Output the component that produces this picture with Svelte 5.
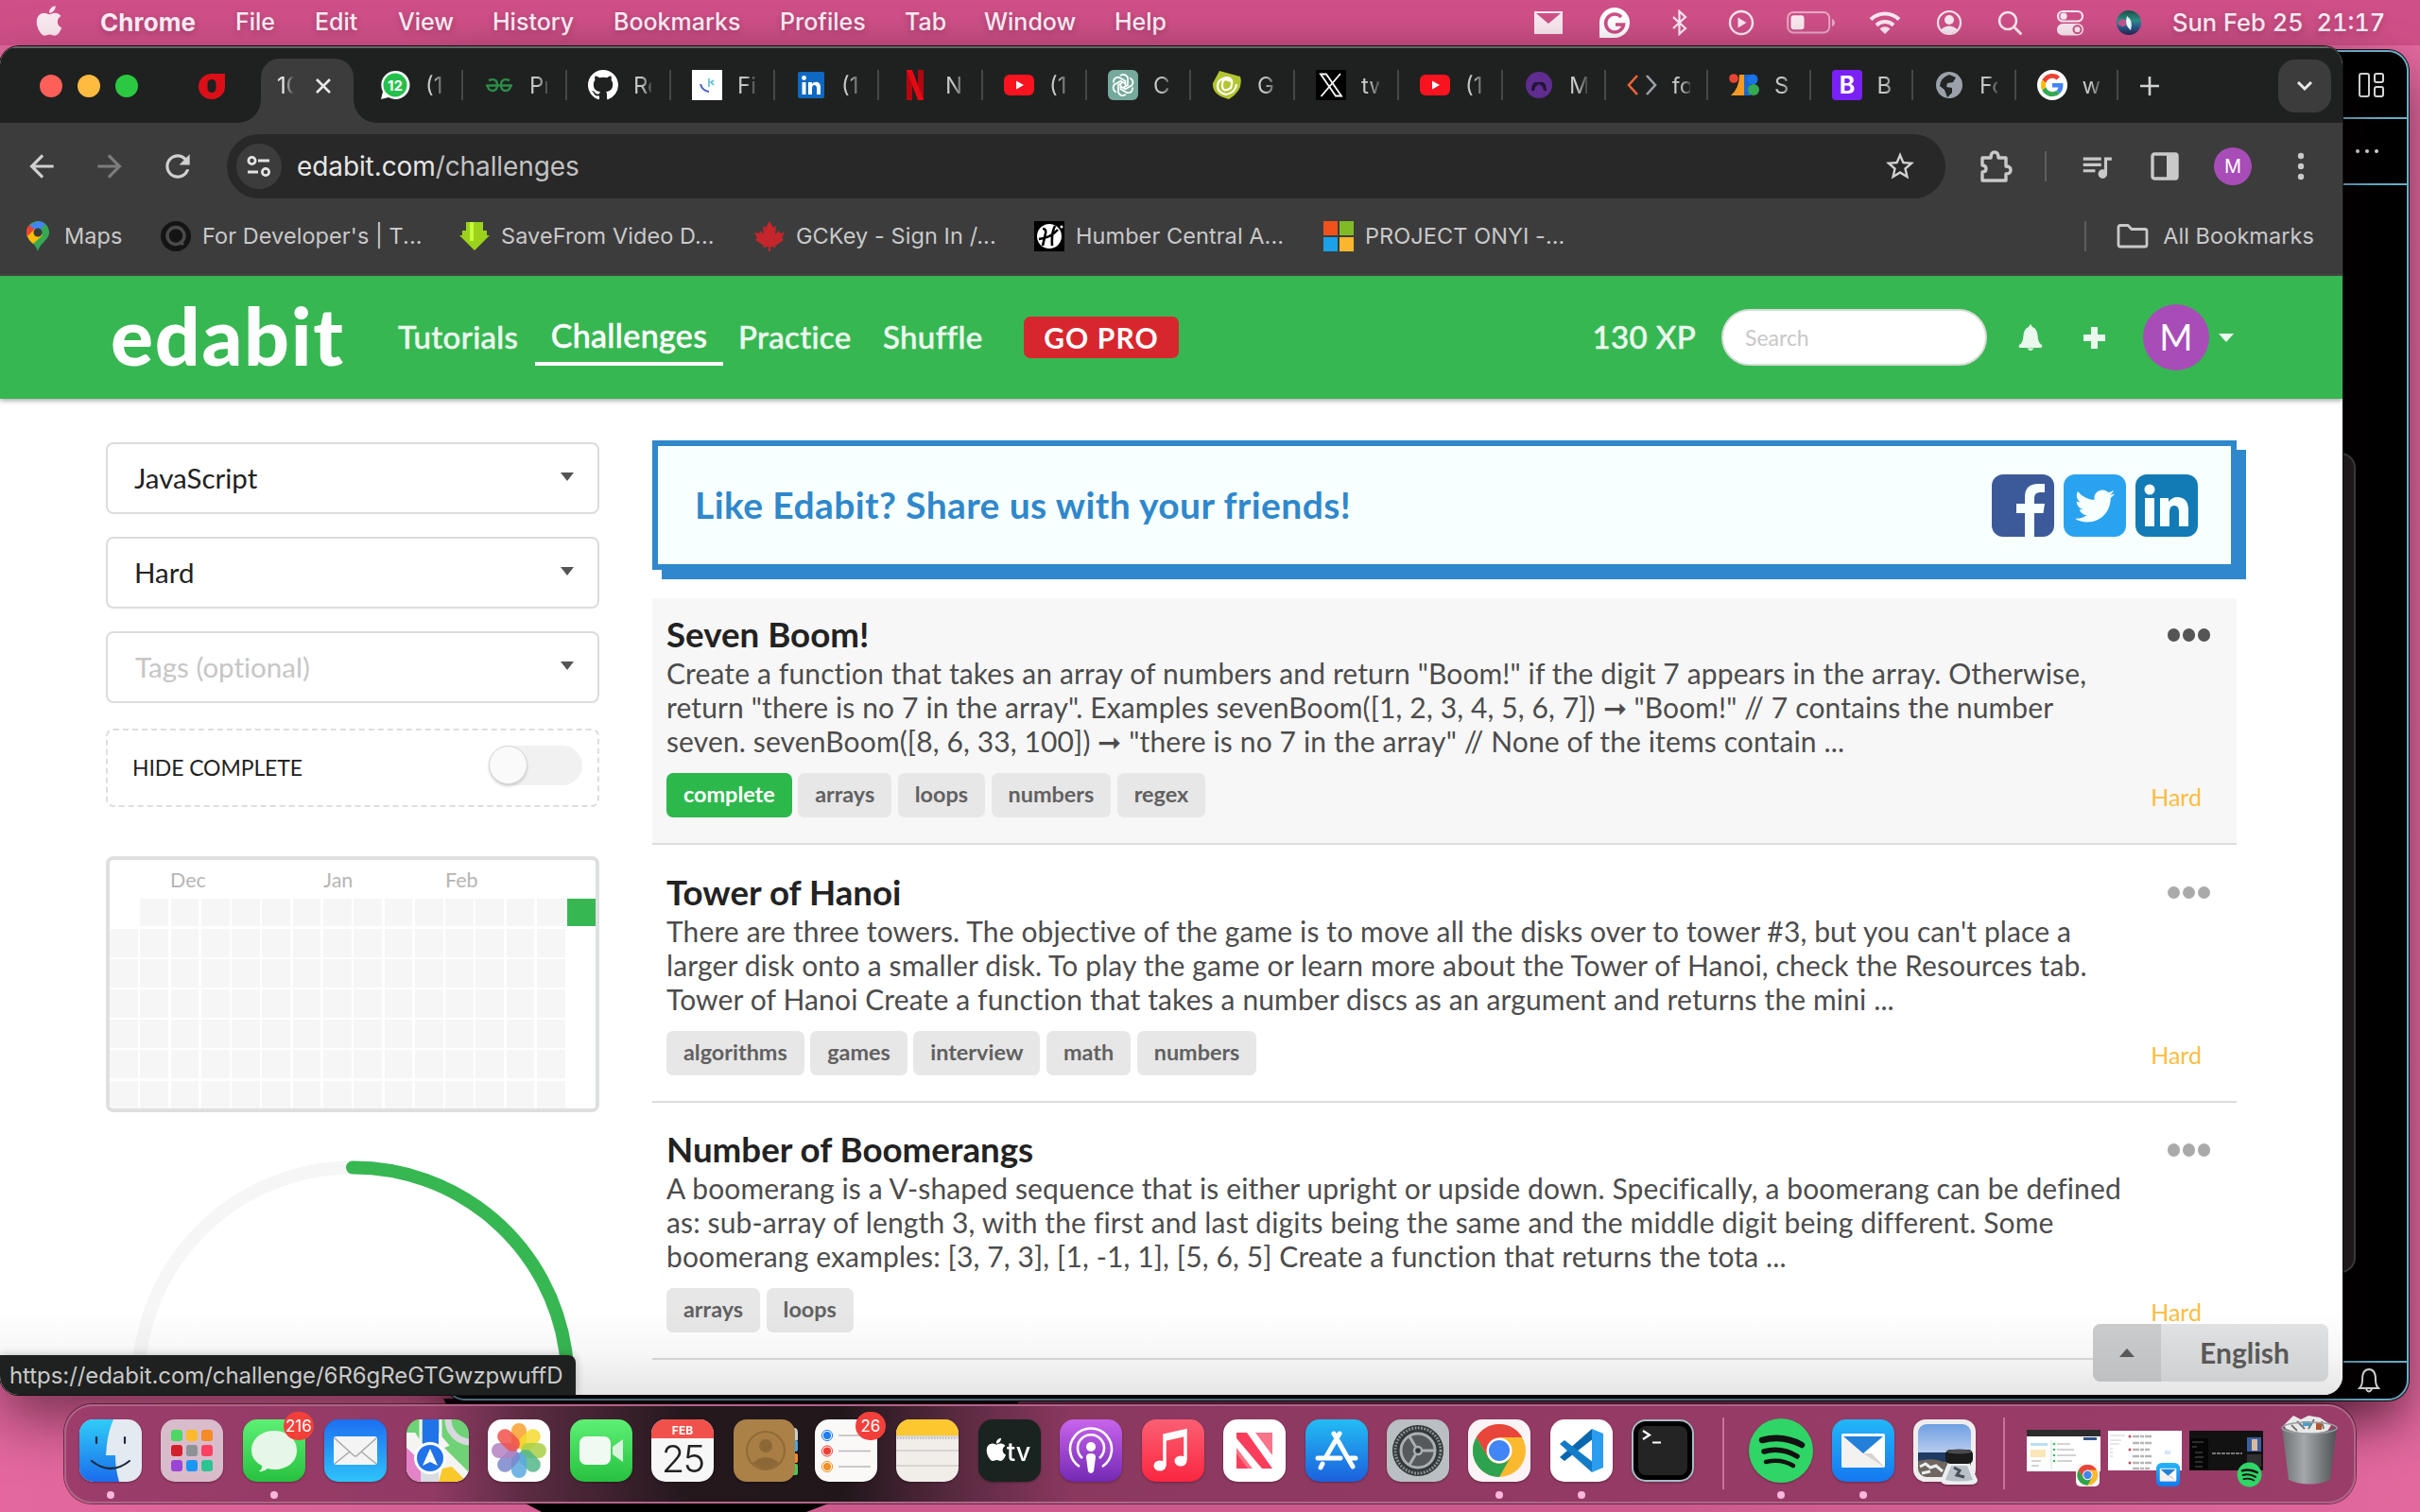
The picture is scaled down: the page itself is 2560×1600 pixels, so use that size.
<script>
  const menus = [
    { label: 'File', w: 84 }, { label: 'Edit', w: 88 }, { label: 'View', w: 100 },
    { label: 'History', w: 128 }, { label: 'Bookmarks', w: 176 }, { label: 'Profiles', w: 132 },
    { label: 'Tab', w: 84 }, { label: 'Window', w: 138 }, { label: 'Help', w: 90 }
  ];
  const status = [
    { icon: 'mailbox', w: 70 }, { icon: 'grammar', w: 70 }, { icon: 'bluetooth', w: 68 },
    { icon: 'play', w: 62 }, { icon: 'battery', w: 84 }, { icon: 'wifi', w: 74 },
    { icon: 'user', w: 62 }, { icon: 'search', w: 66 }, { icon: 'control', w: 62 }, { icon: 'siri', w: 62 }
  ];
  const tabs = [
    { icon: 'whatsapp', label: '(1' }, { icon: 'geeks', label: 'Pr' }, { icon: 'github', label: 'Re' },
    { icon: 'paper', label: 'Fi' }, { icon: 'linkedin', label: '(1' }, { icon: 'netflix', label: 'N' },
    { icon: 'youtube', label: '(1' }, { icon: 'gpt', label: 'C' }, { icon: 'swirl', label: 'G' },
    { icon: 'x', label: 'tw' }, { icon: 'youtube', label: '(1' }, { icon: 'purple', label: 'M' },
    { icon: 'code', label: 'fo' }, { icon: 'sdb', label: 'S' }, { icon: 'bootstrap', label: 'B' },
    { icon: 'globe', label: 'Fo' }, { icon: 'google', label: 'w' }
  ];
  const bookmarks = [
    { icon: 'maps', label: 'Maps', w: 146 }, { icon: 'dev', label: "For Developer's | T...", w: 316 },
    { icon: 'savefrom', label: 'SaveFrom Video D...', w: 312 }, { icon: 'maple', label: 'GCKey - Sign In /...', w: 296 },
    { icon: 'humber', label: 'Humber Central A...', w: 306 }, { icon: 'microsoft', label: 'PROJECT ONYI -...', w: 300 }
  ];
  const cards = [
    {
      title: 'Seven Boom!', hover: true, done: true, tags: ['arrays', 'loops', 'numbers', 'regex'],
      lines: [
        'Create a function that takes an array of numbers and return "Boom!" if the digit 7 appears in the array. Otherwise,',
        'return "there is no 7 in the array". Examples sevenBoom([1, 2, 3, 4, 5, 6, 7]) ➞ "Boom!" // 7 contains the number',
        'seven. sevenBoom([8, 6, 33, 100]) ➞ "there is no 7 in the array" // None of the items contain ...'
      ]
    },
    {
      title: 'Tower of Hanoi', tags: ['algorithms', 'games', 'interview', 'math', 'numbers'],
      lines: [
        "There are three towers. The objective of the game is to move all the disks over to tower #3, but you can't place a",
        'larger disk onto a smaller disk. To play the game or learn more about the Tower of Hanoi, check the Resources tab.',
        'Tower of Hanoi Create a function that takes a number discs as an argument and returns the mini ...'
      ]
    },
    {
      title: 'Number of Boomerangs', tags: ['arrays', 'loops'],
      lines: [
        'A boomerang is a V-shaped sequence that is either upright or upside down. Specifically, a boomerang can be defined',
        'as: sub-array of length 3, with the first and last digits being the same and the middle digit being different. Some',
        'boomerang examples: [3, 7, 3], [1, -1, 1], [5, 6, 5] Create a function that returns the tota ...'
      ]
    },
    { title: 'Sublish Trail', tags: [], lines: [] }
  ];
  const cells = Array.from({ length: 112 }, (_, i) => {
    const row = Math.floor(i / 16), col = i % 16;
    if (col === 15) return row === 0 ? 'done' : 'blank';
    return row === 0 && col === 0 ? 'blank' : '';
  });
  const dock = [
    { icon: 'finder', run: true }, { icon: 'launchpad' }, { icon: 'messages', run: true, badge: '216' },
    { icon: 'mail' }, { icon: 'appmaps' }, { icon: 'photos' }, { icon: 'facetime' }, { icon: 'calendar' },
    { icon: 'contacts' }, { icon: 'reminders', badge: '26' }, { icon: 'notes' }, { icon: 'tv' },
    { icon: 'podcasts' }, { icon: 'music' }, { icon: 'news' }, { icon: 'appstore' }, { icon: 'settings' },
    { icon: 'chrome', run: true }, { icon: 'vscode', run: true }, { icon: 'terminal' }
  ];
  const extras = [{ icon: 'spotify', run: true }, { icon: 'airmail', run: true }, { icon: 'preview' }];
  const petals = ['#f9a02b', '#f2dc2e', '#a9cf46', '#52b788', '#5aa9e0', '#7a86cc', '#b481c2', '#f0524a'];
  const pads = ['#4bd863', '#fdb92c', '#f58a26', '#d3202a', '#8d9299', '#fb4060', '#9a45d6', '#1a96f5', '#2cc493'];
</script>

{#snippet chromeBall()}
  <circle cx="33" cy="33" r="28" fill="#fbb92f" />
  <path d="M33 5a28 28 0 0 1 24.3 14H33z M8.7 19A28 28 0 0 1 57.3 19H33L21 40z" fill="#e8453c" />
  <path d="M8.7 19A28 28 0 0 0 33 61L45 40A14 14 0 0 1 21 40z" fill="#2fa24f" />
  <circle cx="33" cy="33" r="13.5" fill="#fff" /><circle cx="33" cy="33" r="11" fill="#4285f4" />
{/snippet}

{#snippet spotifyBall()}
  <circle cx="33" cy="33" r="34" fill="#2fd566" />
  <g fill="none" stroke="#111" stroke-linecap="round">
    <path d="M13 22q22-6 42 5" stroke-width="6.5" /><path d="M15 34q18-5 35 5" stroke-width="5.5" /><path d="M17 45q16-4 29 4" stroke-width="4.5" />
  </g>
{/snippet}

{#snippet airmailFace()}
  <rect x="10" y="15" width="46" height="36" rx="2" fill="#fff" /><path d="M10 18l46 33H10z" fill="#e9e4e4" opacity=".5" />
  <path d="M12 18h42L33 36z" fill="#2280d8" /><path d="M33 36L56 51l-14-15z" fill="#d8d2d2" />
{/snippet}

{#snippet glyph(name)}
  {#if name === 'mailbox'}
    <svg width="30" height="26" viewBox="0 0 30 26"><path d="M0 1h30v24H0z" fill="#fbe9f1" /><path d="M2 3h26L15 14z" fill="#cf5088" /></svg>
  {:else if name === 'grammar'}
    <svg width="32" height="32" viewBox="0 0 32 32"><path d="M16 0a16 16 0 1 1 0 32H0V16A16 16 0 0 1 16 0z" fill="#fff" /><path d="M23 10a9.500 9.500 0 1 0 2.500 8H17m6 0l3 3" fill="none" stroke="#cf5088" stroke-width="3.500" /></svg>
  {:else if name === 'bluetooth'}
    <svg width="18" height="28" viewBox="0 0 18 28"><path d="M2 8l13 12-6.500 6V2L15 8 2 20" fill="none" stroke="#fbe9f1" stroke-width="2.200" /></svg>
  {:else if name === 'play'}
    <svg width="28" height="28" viewBox="0 0 28 28"><circle cx="14" cy="14" r="12" fill="none" stroke="#fbe9f1" stroke-width="2.400" /><path d="M10.500 8.500v11l9-5.500z" fill="#fbe9f1" /></svg>
  {:else if name === 'battery'}
    <svg width="51" height="26" viewBox="0 0 51 26"><rect x="1.200" y="2" width="44" height="21.500" rx="6" fill="none" stroke="#e9a9c6" stroke-width="2" /><rect x="4.500" y="5.200" width="14" height="15" rx="3" fill="#fbe9f1" /><path d="M48 9v8q3-1 3-4t-3-4z" fill="#e9a9c6" /></svg>
  {:else if name === 'wifi'}
    <svg width="34" height="26" viewBox="0 0 34 26"><g fill="none" stroke="#fbe9f1" stroke-width="4"><path d="M2 9.500a21.500 21.500 0 0 1 30 0" /><path d="M8 15.700a13 13 0 0 1 18 0" /></g><path d="M17 25l-5.500-5.500a8 8 0 0 1 11 0z" fill="#fbe9f1" /></svg>
  {:else if name === 'user'}
    <svg width="28" height="28" viewBox="0 0 28 28"><circle cx="14" cy="14" r="12" fill="none" stroke="#fbe9f1" stroke-width="2.200" /><circle cx="14" cy="11" r="5" fill="#fbe9f1" /><path d="M5 21.500q9-8 18 0Q14 29 5 21.500z" fill="#fbe9f1" /></svg>
  {:else if name === 'search'}
    <svg width="28" height="28" viewBox="0 0 28 28"><circle cx="12" cy="12" r="9" fill="none" stroke="#fbe9f1" stroke-width="2.600" /><path d="M18.500 18.500l7 7" stroke="#fbe9f1" stroke-width="3" stroke-linecap="round" /></svg>
  {:else if name === 'control'}
    <svg width="30" height="28" viewBox="0 0 30 28"><rect x="2" y="2" width="26" height="10.500" rx="5.200" fill="none" stroke="#fbe9f1" stroke-width="2.200" /><circle cx="8" cy="7.200" r="3.600" fill="#fbe9f1" /><rect x="1" y="15" width="28" height="12.500" rx="6.200" fill="#fbe9f1" /><circle cx="22.500" cy="21.200" r="4" fill="none" stroke="#cf5088" stroke-width="2" /></svg>
  {:else if name === 'siri'}
    <svg width="28" height="28" viewBox="0 0 28 28"><defs><linearGradient id="siri" x1="0" x2="0" y1="0" y2="1"><stop offset="0" stop-color="#174f47" /><stop offset=".4" stop-color="#2f8f86" /><stop offset=".65" stop-color="#2a5f92" /><stop offset="1" stop-color="#2a2452" /></linearGradient></defs><circle cx="14" cy="14" r="13" fill="url(#siri)" /><path d="M2 15q5-9 11-1-5 8-11 1z" fill="#c2568f" /><path d="M12 7q7 5 4 15-7-5-4-15z" fill="#eaffff" /></svg>
  {:else if name === 'whatsapp'}
    <svg width="32" height="32" viewBox="0 0 32 32"><path d="M16 1a15 15 0 1 1-7 28L1 31l2-8A15 15 0 0 1 16 1z" fill="#fff" /><circle cx="16" cy="16" r="12.500" fill="#25c04b" /><text x="16" y="21.500" class="t-icon" font-size="15" text-anchor="middle" fill="#fff">12</text></svg>
  {:else if name === 'geeks'}
    <svg width="28" height="16" viewBox="0 0 28 16"><g fill="none" stroke="#2c8c46" stroke-width="2.400"><path d="M3 3q9-3 9 5 0 6-5 6-4 0-5-4.500M25 3q-9-3-9 5 0 6 5 6 4 0 5-4.500M0 8.500h28" /></g></svg>
  {:else if name === 'github'}
    <svg width="32" height="32" viewBox="0 0 16 16"><path fill="#fff" d="M8 0C3.580 0 0 3.580 0 8c0 3.540 2.290 6.530 5.470 7.590.4.070.55-.17.55-.38 0-.19-.01-.82-.01-1.490-2.010.37-2.530-.49-2.690-.94-.09-.23-.48-.94-.82-1.130-.28-.15-.68-.52-.01-.53.63-.01 1.080.58 1.230.82.72 1.210 1.870.87 2.330.66.07-.52.28-.87.51-1.070-1.780-.2-3.640-.89-3.640-3.950 0-.87.31-1.590.82-2.150-.08-.2-.36-1.020.08-2.120 0 0 .67-.21 2.200.82.64-.18 1.320-.27 2-.27.68 0 1.360.09 2 .27 1.530-1.040 2.200-.82 2.200-.82.44 1.100.16 1.920.08 2.120.51.56.82 1.270.82 2.150 0 3.070-1.870 3.750-3.650 3.950.29.25.54.73.54 1.480 0 1.070-.01 1.930-.01 2.200 0 .21.15.46.55.38A8.013 8.013 0 0016 8c0-4.420-3.580-8-8-8z" /></svg>
  {:else if name === 'paper'}
    <svg width="32" height="32" viewBox="0 0 32 32"><path d="M0 0h32v32H0z" fill="#fff" /><path d="M9 15q2 7 9 8" fill="none" stroke="#4a5fc4" stroke-width="2" /><path d="M18 9v9m5-7l-3 2 3 3" fill="none" stroke="#6cc3d9" stroke-width="1.800" /></svg>
  {:else if name === 'linkedin'}
    <svg width="28" height="28" viewBox="0 0 28 28"><rect width="28" height="28" rx="2" fill="#0f68c1" /><path d="M4.500 11h4v13h-4zM11 11h4v2c2-3.500 9-3.500 9 3v8h-4v-7c0-4-5-4-5 0v7h-4z" fill="#fff" /><circle cx="6.500" cy="6.500" r="2.400" fill="#fff" /></svg>
  {:else if name === 'netflix'}
    <svg width="18" height="32" viewBox="0 0 18 32"><path d="M0 0h6v32H0zM12 0h6v32h-6z" fill="#b20710" /><path d="M0 0h6l12 32h-6z" fill="#e50914" /></svg>
  {:else if name === 'youtube'}
    <svg width="32" height="24" viewBox="0 0 32 24"><rect y="1" width="32" height="22" rx="6" fill="#f9131f" /><path d="M13 7.500v9l8-4.500z" fill="#fff" /></svg>
  {:else if name === 'gpt'}
    <svg width="32" height="32" viewBox="0 0 32 32"><rect width="32" height="32" rx="6" fill="#75a99c" /><g fill="none" stroke="#fff" stroke-width="1.700">{#each [0, 60, 120, 180, 240, 300] as a}<path d="M13 6q5-3 8 2v8l-5 3" transform="rotate({a} 16 16)" />{/each}</g></svg>
  {:else if name === 'swirl'}
    <svg width="32" height="32" viewBox="0 0 32 32"><path d="M8 1l22 6q4 14-12 24Q0 27 1 14z" fill="#b3c530" /><path d="M20 12q-9-5-9 4t9 3q4-11-5-11-9 2-9 9t9 9q10-2 11-11" fill="none" stroke="#fff" stroke-width="2.200" /></svg>
  {:else if name === 'x'}
    <svg width="32" height="32" viewBox="0 0 32 32"><path d="M0 0h32v32H0z" /><path d="M5 4.500h6l16 23h-6zM26 4L5.500 28" fill="none" stroke="#fff" stroke-width="1.800" /></svg>
  {:else if name === 'purple'}
    <svg width="28" height="28" viewBox="0 0 28 28"><circle cx="14" cy="14" r="14" fill="#5e2d8f" /><path d="M6 20q0-11 8-9 8-2 8 9-4 1-4-4l-4-3-4 3q0 5-4 4z" fill="#241438" /></svg>
  {:else if name === 'code'}
    <svg width="32" height="22" viewBox="0 0 32 22"><path d="M11 1L2 11l9 10" fill="none" stroke="#f0643a" stroke-width="2.600" /><path d="M21 1l9 10-9 10" fill="none" stroke="#9aa0a6" stroke-width="2.600" /></svg>
  {:else if name === 'sdb'}
    <svg width="32" height="24" viewBox="0 0 32 24"><circle cx="5" cy="5" r="4.800" fill="#e94335" /><path d="M2 23q9-8 9-22h5v22z" fill="#f59a23" /><path d="M16 1h7v22h-7z" fill="#1967d2" /><circle cx="25" cy="6" r="5.500" fill="#1a73e8" /><circle cx="26" cy="17" r="6" fill="#34a853" /></svg>
  {:else if name === 'bootstrap'}
    <svg width="32" height="32" viewBox="0 0 32 32"><rect width="32" height="32" rx="4" fill="#7a22f5" /><text x="16" y="25" class="t-icon" font-size="25" text-anchor="middle" fill="#fff">B</text></svg>
  {:else if name === 'globe'}
    <svg width="28" height="28" viewBox="0 0 28 28"><circle cx="14" cy="14" r="14" fill="#9aa1aa" /><path d="M14 3l7 3-3 5-6 1-1 4 6 1v5l-5 5-3-8-5-4q1-9 10-12z" fill="#222524" /></svg>
  {:else if name === 'google'}
    <svg width="32" height="32" viewBox="0 0 64 64"><circle cx="32" cy="32" r="32" fill="#fff" /><g transform="translate(8 8)"><path fill="#EA4335" d="M24 9.500c3.540 0 6.710 1.220 9.210 3.600l6.850-6.850C35.900 2.380 30.470 0 24 0 14.620 0 6.510 5.380 2.560 13.220l7.980 6.190C12.430 13.720 17.740 9.500 24 9.500z" /><path fill="#4285F4" d="M46.980 24.550c0-1.570-.15-3.090-.38-4.550H24v9.020h12.940c-.58 2.960-2.260 5.480-4.780 7.180l7.730 6c4.510-4.180 7.090-10.360 7.090-17.650z" /><path fill="#FBBC05" d="M10.530 28.590c-.48-1.450-.76-2.990-.76-4.590s.27-3.140.76-4.590l-7.980-6.190C.92 16.460 0 20.120 0 24c0 3.880.92 7.540 2.560 10.780l7.970-6.190z" /><path fill="#34A853" d="M24 48c6.480 0 11.930-2.130 15.890-5.810l-7.730-6c-2.150 1.450-4.920 2.300-8.160 2.300-6.260 0-11.570-4.220-13.470-9.910l-7.980 6.190C6.510 42.620 14.620 48 24 48z" /></g></svg>
  {:else if name === 'maps'}
    <svg width="24" height="32" viewBox="0 0 24 32"><path d="M12 0a12 12 0 0 1 12 12c0 8-9 10-12 20C9 22 0 20 0 12A12 12 0 0 1 12 0z" fill="#34a853" /><path d="M12 0L4 4a12 12 0 0 0-4 9l4 8L20 3a12 12 0 0 0-8-3z" fill="#4285f4" /><path d="M3 4a12 12 0 0 0-2 13l9-7z" fill="#ea4335" /><path d="M1 16l8-8 8 7-10 9q-5-4-6-8z" fill="#fbbc05" /><circle cx="12" cy="12" r="4.500" fill="#37393b" /></svg>
  {:else if name === 'dev'}
    <svg width="32" height="32" viewBox="0 0 32 32"><circle cx="16" cy="16" r="16" fill="#141414" /><circle cx="16" cy="15.500" r="9" fill="none" stroke="#4b4b4b" stroke-width="3.500" /><path d="M20 21l4 4" stroke="#4b4b4b" stroke-width="3" /></svg>
  {:else if name === 'savefrom'}
    <svg width="32" height="30" viewBox="0 0 32 30"><path d="M7 0h18v9h4v5h3L16 30 0 14h3V9h4z" fill="#9bd31c" /><path d="M11 0h4v20h-4z" fill="#c5ff3c" /></svg>
  {:else if name === 'maple'}
    <svg width="32" height="32" viewBox="0 0 32 32"><path d="M16 0l4 7 3-2-1 9 4-4 1 3 5-1-3 6 2 2-9 6 1 2-6-1v5h-2v-5l-6 1 1-2-9-6 2-2-3-6 5 1 1-3 4 4-1-9 3 2z" fill="#c5262c" /></svg>
  {:else if name === 'humber'}
    <svg width="32" height="32" viewBox="0 0 32 32"><path d="M0 0h32v32H0z" /><circle cx="16" cy="16" r="13" fill="#fff" /><path d="M9 8q4 0 3 5l-3 13M22 5q-4 8-3 21M5 19q12-1 20-10" fill="none" stroke="#000" stroke-width="2.600" /><circle cx="29" cy="6" r="1.500" fill="#fff" /></svg>
  {:else if name === 'microsoft'}
    <svg width="32" height="32" viewBox="0 0 32 32"><path d="M0 0h15v15H0z" fill="#f1511b" /><path d="M17 0h15v15H17z" fill="#80bb26" /><path d="M0 17h15v15H0z" fill="#1ba1e8" /><path d="M17 17h15v15H17z" fill="#fbb62d" /></svg>
  {/if}
{/snippet}

{#snippet app(name)}
  <svg class="app" viewBox="0 0 66 66">
    {#if name === 'finder'}
      <rect width="66" height="66" rx="15" fill="#e4eaf2" /><path d="M15 0h21q-7 16-8 38h10q0 14 4 28H15A15 15 0 0 1 0 51V15A15 15 0 0 1 15 0z" fill="url(#blue)" />
      <g fill="none" stroke="#1c2a3c" stroke-width="2.200" stroke-linecap="round"><path d="M18 19v6M48 19v6M13 44q20 16 40 0" /></g>
    {:else if name === 'launchpad'}
      <rect width="66" height="66" rx="15" fill="#d9bccb" />
      {#each pads as c, i}<rect x={11 + (i % 3) * 16} y={11 + Math.floor(i / 3) * 16} width="12" height="12" rx="3" fill={c} />{/each}
    {:else if name === 'messages'}
      <rect width="66" height="66" rx="15" fill="url(#green)" /><path d="M33 12c14 0 24 9 24 21S47 53 33 53q-4 0-7-1-4 4-9 3 4-3 3-6Q9 43 9 33c0-12 10-21 24-21z" fill="#e6f7e8" />
    {:else if name === 'mail'}
      <rect width="66" height="66" rx="15" fill="url(#mailblue)" /><rect x="10" y="18" width="46" height="30" rx="3" fill="#f4f4f4" /><path d="M11 20l20 18q2 2 4 0l20-18M11 47l16-13M55 47L39 34" fill="none" stroke="#a8a8a8" stroke-width="1.500" />
    {:else if name === 'appmaps'}
      <clipPath id="mapclip"><rect width="66" height="66" rx="15" /></clipPath>
      <g clip-path="url(#mapclip)"><path d="M0 0h66v66H0z" fill="#6fd277" /><path d="M0 14h34l32 38v14H0z" fill="#f4f4f2" /><path d="M0 0h17v26z" fill="#6fd277" /><path d="M0 30l15 14v22H0z" fill="#e583c8" /><path d="M34 66l4-14 10-2 16 16z" fill="#f9c82b" /><path d="M40 30l26 26V20z" fill="#6fd277" /><path d="M17 0h17v40H17zM15 54h19v12H15z" fill="#2173ea" /><path d="M15 54h19v12H15z" fill="#d9dce0" /><path d="M15 0v28M36 0v28" stroke="#f4f4f2" stroke-width="3" /><circle cx="68" cy="0" r="24" fill="none" stroke="#d7d9dc" stroke-width="7" /><circle cx="25" cy="41" r="17" fill="#fff" /><circle cx="25" cy="41" r="14" fill="#2173ea" /><path d="M25 31l8 18-8-4-8 4z" fill="#fff" /></g>
    {:else if name === 'photos'}
      <rect width="66" height="66" rx="15" fill="#fdfdfd" />
      {#each petals as c, i}<rect x="25" y="4" width="16" height="27" rx="8" fill={c} opacity=".85" transform="rotate({i * 45} 33 33)" />{/each}
    {:else if name === 'facetime'}
      <rect width="66" height="66" rx="15" fill="url(#green)" /><rect x="10" y="18" width="33" height="30" rx="7" fill="#f1faf2" /><path d="M45 29l11-8v24l-11-8z" fill="#d9f3dc" />
    {:else if name === 'calendar'}
      <rect width="66" height="66" rx="15" fill="#f8f7f7" /><path d="M0 20v-5A15 15 0 0 1 15 0h36a15 15 0 0 1 15 15v5z" fill="#f1514b" /><text x="33" y="16" class="t-icon" font-size="12" text-anchor="middle" fill="#fff">FEB</text><text x="33" y="56" class="t-thin" font-size="40" text-anchor="middle" fill="#222">25</text>
    {:else if name === 'contacts'}
      <path d="M55 9h9q4 0 4 5v8H55z" fill="#c9ccd0" /><rect x="50" y="22" width="18" height="12" rx="2" fill="#4aa7dd" /><rect x="50" y="36" width="18" height="10" rx="2" fill="#ef8b2e" /><rect x="50" y="47" width="18" height="12" rx="2" fill="#4cc45b" />
      <rect width="65" height="66" rx="14" fill="#ac8148" /><circle cx="34" cy="33" r="20" fill="#a87e45" stroke="#8f6a37" stroke-width="2" /><circle cx="34" cy="28" r="7" fill="#8c6836" /><path d="M20 46q14-12 28 0-14 12-28 0z" fill="#8c6836" />
    {:else if name === 'reminders'}
      <rect width="66" height="66" rx="15" fill="#faf9f8" />
      {#each ['#1f7df2', '#ef3f35', '#f49023'] as c, i}<circle cx="13" cy={17 + i * 16.500} r="4.600" fill={c} stroke="#fff" stroke-width="1" /><circle cx="13" cy={17 + i * 16.500} r="5.600" fill="none" stroke={c} /><path d="M25 {17 + i * 16.500}h34" stroke="#b9b9bb" stroke-width="1.500" />{/each}
    {:else if name === 'notes'}
      <rect width="66" height="66" rx="15" fill="#f1eeea" /><path d="M0 17v-2A15 15 0 0 1 15 0h36a15 15 0 0 1 15 15v2z" fill="#fdc82f" /><path d="M0 18h66M0 33h66M0 49h66" stroke="#cfccc9" stroke-width="1.500" /><path d="M1 20h64" stroke="#aaa" stroke-width="1.500" stroke-dasharray="1.500 1.500" />
    {:else if name === 'tv'}
      <rect width="66" height="66" rx="15" fill="#19231f" /><g transform="translate(8.500 18) scale(.054)"><path fill="#fff" d="M318.700 268.700c-.2-36.700 16.400-64.400 50-84.800-18.800-26.900-47.200-41.700-84.700-44.600-35.500-2.800-74.300 20.700-88.500 20.700-15 0-49.400-19.700-76.400-19.700C63.300 141.200 4 184.800 4 273.500q0 39.300 14.400 81.200c12.800 36.700 59 126.700 107.200 125.200 25.200-.6 43-17.900 75.800-17.900 31.800 0 48.300 17.900 76.400 17.900 48.600-.7 90.400-82.500 102.600-119.300-65.200-30.700-61.700-90-61.700-91.900zm-56.600-164.200c27.300-32.400 24.800-61.900 24-72.500-24.100 1.400-52 16.400-67.900 34.900-17.500 19.800-27.800 44.300-25.600 71.900 26.100 2 49.900-11.400 69.500-34.300z" /></g><text x="30" y="43.500" class="t-med" font-size="27" fill="#fff">tv</text>
    {:else if name === 'podcasts'}
      <rect width="66" height="66" rx="15" fill="url(#violet)" /><g fill="none" stroke="#fff" stroke-width="2.600"><path d="M21 50a22 22 0 1 1 24 0" /><path d="M24 41a14 14 0 1 1 18 0" /></g><circle cx="33" cy="29" r="5" fill="#fff" /><path d="M28 40q0-4 5-4t5 4l-2 15q-3 4-6 0z" fill="#fff" />
    {:else if name === 'music'}
      <rect width="66" height="66" rx="15" fill="url(#red)" /><path d="M24 49V17l22-5v31" fill="none" stroke="#fff" stroke-width="3.500" /><path d="M24 16l22-5v7l-22 5z" fill="#fff" /><ellipse cx="19" cy="49" rx="6.500" ry="5.500" fill="#fff" /><ellipse cx="41" cy="44" rx="6.500" ry="5.500" fill="#fff" />
    {:else if name === 'news'}
      <rect width="66" height="66" rx="15" fill="#fff" /><path d="M14 14h11l27 38H41L14 20z" fill="#fb3d5c" /><path d="M34 14h18v24zM14 30v22h17z" fill="#f97389" /><path d="M14 36v16h12z" fill="#fb3d5c" />
    {:else if name === 'appstore'}
      <rect width="66" height="66" rx="15" fill="url(#store)" /><g stroke="#fff" stroke-width="5" stroke-linecap="round"><path d="M36 15L21 41M30 15l20 35M13 41h24M46 41h7M18 47l-2 4" /></g>
    {:else if name === 'settings'}
      <rect width="66" height="66" rx="15" fill="#b9bfc3" /><circle cx="33" cy="33" r="27" fill="#33383a" /><circle cx="33" cy="33" r="24" fill="none" stroke="#8d9396" stroke-width="3" stroke-dasharray="1.800 1.500" /><circle cx="33" cy="33" r="18" fill="#55595b" stroke="#a9afb3" stroke-width="3" /><circle cx="33" cy="33" r="4" fill="#333" stroke="#a9afb3" stroke-width="2.500" /><path d="M38 33h13M30.500 29l-6.500-11M30.500 37l-6.500 11" stroke="#a9afb3" stroke-width="3" />
    {:else if name === 'chrome'}
      <rect width="66" height="66" rx="15" fill="#faf4f7" />{@render chromeBall()}
    {:else if name === 'vscode'}
      <rect width="66" height="66" rx="15" fill="#fff" /><path d="M44 10L10 40l5 4 31-24z" fill="#0b67ad" /><path d="M44 56L10 26l5-4 31 24z" fill="#137cc8" /><path d="M44 10l12 5v36l-12 5z" fill="#2a9df0" />
    {:else if name === 'terminal'}
      <rect width="66" height="66" rx="15" fill="#a9bcc6" /><rect x="2" y="2" width="62" height="62" rx="13" /><rect x="7" y="7" width="52" height="52" rx="8" fill="#242424" /><path d="M12 12l7 4.500-7 4.500M22 24.500h9" fill="none" stroke="#fff" stroke-width="2.200" />
    {:else if name === 'spotify'}
      {@render spotifyBall()}
    {:else if name === 'airmail'}
      <rect width="66" height="66" rx="15" fill="url(#air)" />{@render airmailFace()}
    {:else if name === 'preview'}
      <rect width="66" height="66" rx="13" fill="#f0eded" /><rect x="5" y="5" width="56" height="56" rx="9" fill="url(#sky)" /><path d="M5 35h56v10H5z" fill="#1f3a63" /><path d="M5 44q16-4 27 1l29-3v10a9 9 0 0 1-9 9H14a9 9 0 0 1-9-9z" fill="#6f675f" /><path d="M7 50l6-3 5 4 6-2 7 6M9 57l9-2" stroke="#e8eef2" stroke-width="3" fill="none" /><path d="M37 45h22l9 19q0 5-8 5H37q-8 0-8-5z" fill="#eceff1" /><path d="M40 49h17l6 15q-14 3-29 0z" fill="#b9c0c6" /><path d="M43 51l6 3-3 5 8 2" stroke="#47505a" stroke-width="3" fill="none" /><rect x="34" y="32" width="29" height="15" rx="5" fill="#1b1b1c" /><ellipse cx="48.500" cy="34" rx="13" ry="2.500" fill="#4b4b4c" />
    {/if}
  </svg>
{/snippet}

{#snippet dockItem(d)}
  <div class="dock-item">
    {@render app(d.icon)}
    {#if d.badge}<span class="badge">{d.badge}</span>{/if}
    {#if d.run}<i class="running"></i>{/if}
  </div>
{/snippet}

<svg class="defs" width="0" height="0">
  <defs>
    <linearGradient id="blue" x2="0" y2="1"><stop stop-color="#2fcdf8" /><stop offset="1" stop-color="#1b6cec" /></linearGradient>
    <linearGradient id="mailblue" x2="0" y2="1"><stop stop-color="#1d6ff0" /><stop offset="1" stop-color="#2ec3fb" /></linearGradient>
    <linearGradient id="green" x2="0" y2="1"><stop stop-color="#5df075" /><stop offset="1" stop-color="#27c13f" /></linearGradient>
    <linearGradient id="violet" x2="0" y2="1"><stop stop-color="#c864ec" /><stop offset="1" stop-color="#7429b4" /></linearGradient>
    <linearGradient id="red" x2="0" y2="1"><stop stop-color="#fb5f73" /><stop offset="1" stop-color="#fa2740" /></linearGradient>
    <linearGradient id="store" x2="0" y2="1"><stop stop-color="#23bdf4" /><stop offset="1" stop-color="#1c60dd" /></linearGradient>
    <linearGradient id="air" x2="0" y2="1"><stop stop-color="#23b6f9" /><stop offset="1" stop-color="#1478f0" /></linearGradient>
    <linearGradient id="sky" x2="0" y2="1"><stop stop-color="#6f9fe2" /><stop offset=".55" stop-color="#b9cdee" /></linearGradient>
    <linearGradient id="bin" x2="1" y2="0"><stop stop-color="#6c7072" /><stop offset=".4" stop-color="#a4a8aa" /><stop offset="1" stop-color="#4e5254" /></linearGradient>
  </defs>
</svg>

<div class="desktop">
  <svg class="wallpaper" viewBox="0 0 2560 1600"><path d="M469 1480h611l-20 30-181 80-26 10H573l-19-10-60-60z M950 46h90v6h-90z" /></svg>

  <header class="menubar">
    <svg class="apple" viewBox="0 0 384 512"><path fill="#fbe9f1" d="M318.700 268.700c-.2-36.700 16.400-64.400 50-84.800-18.800-26.900-47.200-41.700-84.700-44.600-35.500-2.800-74.300 20.700-88.500 20.700-15 0-49.400-19.700-76.400-19.700C63.300 141.200 4 184.800 4 273.500q0 39.300 14.400 81.200c12.800 36.700 59 126.700 107.200 125.200 25.200-.6 43-17.900 75.800-17.900 31.800 0 48.300 17.900 76.400 17.900 48.600-.7 90.400-82.500 102.600-119.300-65.200-30.700-61.700-90-61.700-91.900zm-56.600-164.200c27.300-32.400 24.800-61.900 24-72.500-24.100 1.400-52 16.400-67.900 34.900-17.500 19.800-27.800 44.300-25.600 71.900 26.100 2 49.900-11.400 69.500-34.300z" /></svg>
    <b class="app-name">Chrome</b>
    {#each menus as m}<span class="menu" style:width="{m.w}px">{m.label}</span>{/each}
    <div class="status">
      {#each status as s}<span class="slot" style:width="{s.w}px">{@render glyph(s.icon)}</span>{/each}
      <span class="clock">Sun Feb 25&nbsp; 21:17</span>
    </div>
  </header>

  <section class="editor-window">
    <div class="ed-cell ed-top"><svg width="28" height="26" viewBox="0 0 28 26"><g fill="none" stroke="#ddd" stroke-width="2"><rect x="1" y="1" width="10" height="24" rx="2" /><rect x="17" y="1" width="9" height="9" rx="2" /><rect x="17" y="15" width="9" height="10" rx="2" /></g></svg></div>
    <div class="ed-cell ed-more"><svg width="26" height="6" viewBox="0 0 26 6"><g fill="#ddd"><circle cx="3" cy="3" r="2" /><circle cx="13" cy="3" r="2" /><circle cx="23" cy="3" r="2" /></g></svg></div>
    <div class="ed-body"><div class="ed-panel"></div></div>
    <div class="ed-cell ed-bell"><svg width="24" height="28" viewBox="0 0 24 28"><path d="M2 22q3-3 3-9 0-11 7-11t7 11q0 6 3 9zM9 23q3 5 6 0" fill="none" stroke="#ddd" stroke-width="2" /></svg></div>
  </section>

  <section class="browser">
    <div class="tabstrip">
      <div class="lights"><i class="close"></i><i class="min"></i><i class="max"></i></div>
      <svg class="pinned" viewBox="0 0 28 28"><path d="M14 1h14v13a14 13.500 0 1 1-14-13z" fill="#dc0f19" /><rect x="9.500" y="7" width="9" height="14" rx="4.500" fill="#1f2120" /></svg>
      <div class="tab-active"><span>10</span><svg width="18" height="18" viewBox="0 0 18 18"><path d="M2 2l14 14M16 2L2 16" stroke="#e8e8e8" stroke-width="2.600" /></svg></div>
      <div class="tabs">
        {#each tabs as t}
          <div class="tab"><span class="favicon">{@render glyph(t.icon)}</span><span class="tab-label">{t.label}</span></div>
        {/each}
      </div>
      <svg class="new-tab" viewBox="0 0 20 20"><path d="M10 0v20M0 10h20" stroke="#d2d2d2" stroke-width="2.600" /></svg>
      <div class="tab-search"><svg width="18" height="12" viewBox="0 0 18 12"><path d="M2 2l7 7 7-7" fill="none" stroke="#e8e8e8" stroke-width="3" /></svg></div>
    </div>

    <div class="toolbar">
      <div class="nav-buttons">
        <svg viewBox="0 0 24 24" fill="#d0d0d0"><path d="M20 11H7.830l5.590-5.590L12 4l-8 8 8 8 1.410-1.410L7.830 13H20v-2z" /></svg>
        <svg viewBox="0 0 24 24" fill="#7c7c7c"><path d="M4 11h12.170l-5.590-5.590L12 4l8 8-8 8-1.410-1.410L16.170 13H4v-2z" /></svg>
        <svg viewBox="0 0 24 24" fill="#d0d0d0"><path d="M17.650 6.350C16.200 4.900 14.210 4 12 4c-4.420 0-7.990 3.580-7.990 8s3.570 8 7.990 8c3.730 0 6.840-2.550 7.730-6h-2.080c-.82 2.330-3.040 4-5.650 4-3.310 0-6-2.690-6-6s2.690-6 6-6c1.660 0 3.140.69 4.220 1.780L13 11h7V4l-2.350 2.350z" /></svg>
      </div>
      <div class="omnibox">
        <span class="site-info"><svg width="26" height="24" viewBox="0 0 26 24"><g fill="none" stroke="#e3e3e3" stroke-width="2.800"><circle cx="5.500" cy="6" r="3.600" /><path d="M12 6h12M1 18h11" /><circle cx="20" cy="18" r="3.600" /></g></svg></span>
        <span class="url">edabit.com<em>/challenges</em></span>
        <svg class="star" viewBox="0 0 24 24" fill="#d0d0d0"><path d="M22 9.240l-7.190-.62L12 2 9.190 8.630 2 9.240l5.460 4.730L5.820 21 12 17.270 18.180 21l-1.630-7.030L22 9.240zM12 15.400l-3.760 2.270 1-4.280-3.320-2.880 4.380-.38L12 6.100l1.710 4.040 4.380.38-3.320 2.880 1 4.280L12 15.400z" /></svg>
      </div>
      <div class="tools">
        <svg class="puzzle" viewBox="0 0 36 36"><path d="M4 9h9q0-6 4-6t4 6h8v9q5 0 5 4t-5 4v7H4v-9q4 0 4-3.500T4 17z" fill="none" stroke="#c9c9c9" stroke-width="3.400" stroke-linejoin="round" /></svg>
        <i class="bar"></i>
        <svg class="queue" viewBox="0 0 24 24" fill="#c9c9c9"><path d="M15 6H3v2h12V6zm0 4H3v2h12v-2zM3 16h8v-2H3v2zM17 6v8.180c-.31-.11-.65-.18-1-.18-1.660 0-3 1.340-3 3s1.340 3 3 3 3-1.340 3-3V8h3V6h-5z" /></svg>
        <svg class="panel" viewBox="0 0 30 30"><rect x="2" y="2" width="26" height="26" rx="2" fill="none" stroke="#c9c9c9" stroke-width="3.400" /><path d="M17 2h11v26H17z" fill="#c9c9c9" /></svg>
        <span class="profile">M</span>
        <svg class="kebab" viewBox="0 0 8 30" fill="#c9c9c9"><circle cx="4" cy="4" r="3.200" /><circle cx="4" cy="15" r="3.200" /><circle cx="4" cy="26" r="3.200" /></svg>
      </div>
    </div>

    <div class="bookmarks">
      {#each bookmarks as b}
        <span class="bookmark" style:width="{b.w}px"><span class="bm-icon">{@render glyph(b.icon)}</span>{b.label}</span>
      {/each}
      <div class="all-bookmarks"><i class="bar"></i><svg width="34" height="26" viewBox="0 0 34 26"><path d="M2 3.500q0-2 2-2h8l4 4h14q2 0 2 2v14.500q0 2-2 2H4q-2 0-2-2z" fill="none" stroke="#c9c9c9" stroke-width="2.800" /></svg>All Bookmarks</div>
    </div>

    <nav class="site-nav">
      <span class="brand">edabit</span>
      <span class="link tut">Tutorials</span><span class="link active">Challenges</span><span class="link pra">Practice</span><span class="link shu">Shuffle</span>
      <span class="pro">GO PRO</span>
      <span class="xp">130 XP</span>
      <span class="site-search">Search</span>
      <svg class="bell" viewBox="0 0 26 28" fill="#ebf8ee"><path d="M13 0l2 3q5 2 5.500 9 .5 8 4.500 10 .8 3-1 3H2q-2 0-1-3 4-2 4.500-10Q6 5 11 3zM9.500 25.500h7q-3.500 5-7 0z" /></svg>
      <svg class="plus" viewBox="0 0 25 25"><path d="M12.500 1v23M1 12.500h23" stroke="#ebf8ee" stroke-width="7" /></svg>
      <span class="avatar">M</span>
      <i class="caret"></i>
    </nav>

    <main class="page">
      <aside class="sidebar">
        <div class="select">JavaScript<i></i></div>
        <div class="select">Hard<i></i></div>
        <div class="select placeholder">Tags (optional)<i></i></div>
        <div class="toggle-row"><span class="toggle-label">HIDE COMPLETE</span><span class="toggle"><i></i></span></div>
        <div class="heatmap">
          <div class="months"><span class="dec">Dec</span><span class="jan">Jan</span><span>Feb</span></div>
          <div class="cells">{#each cells as c}<i class={c}></i>{/each}</div>
        </div>
        <svg class="ring" viewBox="0 0 468 468" fill="none" stroke-width="14"><circle cx="234" cy="234" r="226.500" stroke="#f6f6f6" /><path d="M234 7.500A226.500 226.500 0 0 1 300 451" stroke="#36b752" stroke-linecap="round" /></svg>
      </aside>

      <section class="content">
        <div class="share">
          <strong>Like Edabit? Share us with your friends!</strong>
          <svg viewBox="0 0 66 66"><rect width="66" height="66" rx="12" fill="#3c5a99" /><path d="M35 66V41h-9V31h9v-7q0-14 14-14h7v9h-5q-6 0-6 6v6h11l-1.500 10H45v25z" fill="#f8ffff" /></svg>
          <svg viewBox="0 0 66 66"><rect width="66" height="66" rx="12" fill="#29a3ef" /><g transform="translate(12 12.500) scale(.082)"><path fill="#f8ffff" d="M459.370 151.716c.325 4.548.325 9.097.325 13.645 0 138.720-105.583 298.558-298.558 298.558-59.452 0-114.680-17.219-161.137-47.106 8.447.974 16.568 1.299 25.340 1.299 49.055 0 94.213-16.568 130.274-44.832-46.132-.975-84.792-31.188-98.112-72.772 6.498.974 12.995 1.624 19.818 1.624 9.421 0 18.843-1.300 27.614-3.573-48.081-9.747-84.143-51.980-84.143-102.985v-1.299c13.969 7.797 30.214 12.670 47.431 13.319-28.264-18.843-46.781-51.005-46.781-87.391 0-19.492 5.197-37.360 14.294-52.954 51.655 63.675 129.300 105.258 216.365 109.807-1.624-7.797-2.599-15.918-2.599-24.040 0-57.828 46.782-104.934 104.934-104.934 30.213 0 57.502 12.670 76.670 33.137 23.715-4.548 46.456-13.320 66.599-25.340-7.798 24.366-24.366 44.833-46.132 57.827 21.117-2.273 41.584-8.122 60.426-16.243-14.292 20.791-32.161 39.308-52.628 54.253z" /></g></svg>
          <svg viewBox="0 0 66 66"><rect width="66" height="66" rx="12" fill="#127bb6" /><path d="M10 25h10v30H10zM26 25h9v4q4-5 9-5 12 0 12 14v17H46V40q0-7-5-7t-5 7v15H26z" fill="#f8ffff" /><circle cx="15" cy="16" r="5.500" fill="#f8ffff" /></svg>
        </div>

        {#each cards as c}
          <article class="card" class:hover={c.hover}>
            <div class="card-head"><h2>{c.title}</h2><span class="dots"><i></i><i></i><i></i></span></div>
            <p>{#each c.lines as l}<span>{l}</span>{/each}</p>
            <div class="tags">
              {#if c.done}<span class="tag complete">complete</span>{/if}
              {#each c.tags as t}<span class="tag">{t}</span>{/each}
              <span class="level">Hard</span>
            </div>
          </article>
        {/each}
      </section>
      <div class="shade"></div>
      <div class="language"><span class="lang-arrow"><i></i></span><span class="lang-name">English</span></div>
      <div class="link-status">https://edabit.com/challenge/6R6gReGTGwzpwuffD</div>
    </main>
  </section>

  <footer class="dock">
    {#each dock as d}{@render dockItem(d)}{/each}
    <i class="divider"></i>
    {#each extras as d}{@render dockItem(d)}{/each}
    <i class="divider second"></i>
    <svg class="mini" viewBox="0 0 78 62"><path d="M0 0h78v44H0z" fill="#fff" /><path d="M0 0h78v7H0z" fill="#2c2c2c" /><path d="M4 14h18v3H4z" fill="#bcdcf5" /><path d="M4 21h16v8H4z" fill="#fbe6b8" /><path d="M26 11v31" stroke="#ddd" /><g fill="#32c45c"><circle cx="29" cy="15" r="1.300" /><circle cx="29" cy="21" r="1.300" /><circle cx="29" cy="27" r="1.300" /><circle cx="29" cy="33" r="1.300" /></g><path d="M32 15h14M32 21h18M32 27h20M32 33h16M5 33h10M5 38h8" stroke="#c5c5c5" stroke-width="1.500" /><path d="M60 8h14v3H60z" fill="#35538e" /><rect x="52" y="36" width="25" height="24" rx="5" fill="#faf4f7" /><g transform="translate(51.500 35) scale(.39)">{@render chromeBall()}</g></svg>
    <svg class="mini" viewBox="0 0 78 62"><path d="M0 1h78v42H0z" fill="#fff" /><path d="M2 6h16M2 11h12M2 15h10M2 20h3M2 24h3M2 28h3" stroke="#ccc" /><path d="M26 7h20M26 14h20M26 21h18M26 28h20M26 35h20M26 41h18" stroke="#b5b5b5" stroke-width="2.500" stroke-dasharray="7 1 4 1" /><g fill="#c0505a"><circle cx="23" cy="7" r="1.500" /><circle cx="23" cy="21" r="1.500" /><circle cx="23" cy="35" r="1.500" /></g><path d="M60 22h6v4h-6z" fill="#d6e6f7" /><g transform="translate(51 35) scale(.38)"><rect width="66" height="66" rx="15" fill="url(#air)" />{@render airmailFace()}</g></svg>
    <svg class="mini" viewBox="0 0 78 62"><path d="M0 1h78v42H0z" fill="#121212" /><path d="M1 9h19v33H1z" fill="#060606" /><path d="M3 13h12M3 18h5M6 24h8M6 29h9M6 34h8M6 39h8" stroke="#555" /><path d="M24 25h32" stroke="#999" stroke-width="1.300" stroke-dasharray="4 1" /><path d="M61 8h15v15H61z" fill="#3c5fa0" /><path d="M66 10h6v12h-6z" fill="#d8b9a0" /><path d="M61 26h15v13H61z" fill="#303030" /><g transform="translate(51 35) scale(.38)">{@render spotifyBall()}</g></svg>
    <svg class="trash" viewBox="0 0 62 76"><path d="M4 12L14 2l8 4 8-4 12 2 12 8-6 10H10z" fill="#e9e9e9" /><path d="M18 8l8 8M36 6l-6 10M44 8l2 8M12 12l6 6" stroke="#777" stroke-width="2" /><path d="M24 8h8v5h-8z" fill="#3f9fd0" /><path d="M38 10h6v7h-6z" fill="#b5552d" /><path d="M2 14q29 14 58 0l-7 56q-22 9-44 0z" fill="url(#bin)" /><ellipse cx="31" cy="15" rx="29" ry="6" fill="none" stroke="#9a9ea0" stroke-width="1.500" /></svg>
  </footer>
</div>

<style>
  :global(body) { margin: 0; background: #d95b94; }
  i { display: block; font-style: normal; }
  svg { display: block; flex: none; }
  .defs { position: absolute; }
  .t-icon { font-family: Inter, sans-serif; font-weight: 700; }
  .t-med { font-family: Inter, sans-serif; font-weight: 500; }
  .t-thin { font-family: Inter, sans-serif; font-weight: 300; letter-spacing: -2px; }

  .desktop { position: relative; width: 2560px; height: 1600px; overflow: hidden; font-family: Inter, "Liberation Sans", sans-serif;
    background: linear-gradient(90deg, #e4689f, #cc5b8c 30%, #cc5b8c 70%, #e2689e); }
  .wallpaper { position: absolute; inset: 0; width: 2560px; height: 1600px; }

  .menubar { position: relative; height: 48px; box-sizing: border-box; padding: 0 0 2px 38px; display: flex; align-items: center;
    background: #cf5088; color: #fdeef5; font-size: 25px; font-weight: 500; white-space: nowrap; text-shadow: 0 2px 6px rgba(90, 20, 50, .35); }
  .apple { width: 28px; height: 36px; margin-right: 40px; margin-top: -3px; }
  .app-name { width: 143px; font-weight: 700; font-size: 26px; letter-spacing: .1px; }
  .menu { letter-spacing: 0; }
  .status { display: flex; align-items: center; margin-left: auto; padding-right: 37px; }
  .slot { display: flex; justify-content: center; padding-top: 2px; }
  .clock { width: 225px; margin-left: 15px; font-size: 25.5px; font-variant-numeric: tabular-nums; }

  .editor-window { position: absolute; left: 470px; top: 53px; width: 2074px; height: 1425px; border: 2px solid #6aaec6; border-radius: 22px;
    background: #000; display: flex; flex-direction: column; box-shadow: 0 0 0 1px #111, 0 24px 50px rgba(30, 0, 15, .55); }
  .ed-cell { display: flex; justify-content: flex-end; align-items: center; box-sizing: border-box; border-bottom: 2px solid #6aaec6; padding-right: 23px; }
  .ed-top { height: 71px; }
  .ed-more { height: 70px; padding-right: 29px; }
  .ed-body { flex: 1; display: flex; justify-content: flex-end; }
  .ed-panel { width: 200px; height: 864px; margin: 283px 54px 0 0; background: #231f21; border: 2px solid #444; border-radius: 16px; }
  .ed-bell { height: 40px; border-bottom: 0; border-top: 2px solid #6aaec6; padding-right: 28px; }

  .browser { position: absolute; left: 0; top: 49px; width: 2478px; height: 1427px; border-radius: 20px; overflow: hidden; background: #fff;
    box-shadow: 0 0 0 1px #111, 0 26px 60px rgba(20, 0, 10, .5); display: flex; flex-direction: column; }
  .tabstrip { height: 81px; box-sizing: border-box; border-top: 2px solid #666; background: #1f2120; display: flex; align-items: center; padding-left: 42px; flex: none; }
  .lights { display: flex; gap: 16px; }
  .lights i { width: 24px; height: 24px; border-radius: 50%; }
  .close { background: #fe5f58; } .min { background: #febb40; } .max { background: #2ac941; }
  .pinned { width: 28px; height: 28px; margin-left: 64px; }
  .tab-active { position: relative; width: 98px; height: 68px; margin: 11px 6px 0 38px; box-sizing: border-box; border-radius: 20px 20px 0 0; background: #3c3c3c;
    display: flex; align-items: center; justify-content: space-between; padding: 0 23px 11px 17px; color: #e8e8e8; font-size: 24px; }
  .tab-active span { width: 18px; overflow: hidden; mask-image: linear-gradient(90deg, #000 40%, transparent); }
  .tab-active::before, .tab-active::after { content: ""; position: absolute; bottom: 0; width: 24px; height: 24px; }
  .tab-active::before { left: -24px; background: radial-gradient(circle at 0 0, transparent 23.5px, #3c3c3c 24px); }
  .tab-active::after { right: -24px; background: radial-gradient(circle at 100% 0, transparent 23.5px, #3c3c3c 24px); }
  .tabs { display: grid; grid-template-columns: repeat(11, 110px) repeat(6, 108.5px); margin-top: -1px; }
  .tab { height: 32px; display: flex; align-items: center; border-right: 2px solid #464746; padding-left: 22px; color: #c5c7c5; font-size: 24px; }
  .favicon { width: 32px; display: flex; justify-content: center; margin-right: 16px; flex: none; }
  .tab-label { width: 19px; overflow: hidden; white-space: nowrap; mask-image: linear-gradient(90deg, #000 45%, rgba(0, 0, 0, .25)); }
  .new-tab { width: 20px; height: 20px; margin-left: 23px; }
  .tab-search { width: 56px; height: 56px; border-radius: 18px; background: #3c3c3c; display: flex; align-items: center; justify-content: center; margin-left: auto; margin-right: 12px; }

  .toolbar { height: 92px; background: #3c3c3c; display: flex; align-items: center; flex: none; padding-left: 25px; }
  .nav-buttons { display: flex; gap: 34px; width: 215px; }
  .nav-buttons svg { width: 38px; height: 38px; }
  .omnibox { width: 1818px; height: 68px; border-radius: 34px; background: #282828; display: flex; align-items: center; padding: 0 30px 0 10px; box-sizing: border-box; }
  .site-info { width: 48px; height: 48px; border-radius: 50%; background: #3c3c3c; display: flex; align-items: center; justify-content: center; }
  .url { margin-left: 16px; font-size: 28px; color: #e6e6e6; letter-spacing: -.1px; flex: 1; }
  .url em { font-style: normal; color: #c2c2c2; }
  .star { width: 36px; height: 36px; }
  .tools { display: flex; align-items: center; padding-left: 35px; }
  .puzzle { width: 36px; height: 36px; margin-right: 34px; }
  .bar { width: 2px; height: 32px; background: #5e5e5e; }
  .queue { width: 38px; height: 38px; margin-left: 34px; }
  .panel { width: 30px; height: 30px; margin-left: 38px; }
  .profile { width: 40px; height: 40px; border-radius: 50%; background: #a84cb8; color: #fff; font-size: 20px; display: flex; align-items: center; justify-content: center; margin-left: 37px; }
  .kebab { width: 8px; height: 30px; margin-left: 48px; }

  .bookmarks { height: 70px; box-sizing: border-box; background: #3c3c3c; border-bottom: 2px solid #484848; display: flex; align-items: center; flex: none; padding: 0 30px 13px 24px; color: #c9c9c9; font-size: 23.5px; letter-spacing: .07px; white-space: nowrap; }
  .bookmark { display: flex; align-items: center; }
  .bm-icon { width: 32px; margin-right: 12px; display: flex; justify-content: center; flex: none; }
  .all-bookmarks { margin-left: auto; display: flex; align-items: center; }
  .all-bookmarks svg { margin: 0 15px 0 32px; }

  .site-nav { position: relative; z-index: 1; height: 130px; box-sizing: border-box; flex: none; background: #37b752; box-shadow: 0 2px 5px rgba(0, 0, 0, .35); display: flex; align-items: center;
    padding: 0 115px 0 117px; font-family: Lato, sans-serif; color: #ebf8ee; font-size: 33px; white-space: nowrap; }
  .brand { width: 304px; font-size: 84px; font-weight: 900; color: #fff; line-height: 100px; letter-spacing: 1.700px; padding-bottom: 4px; }
  .link, .xp { font-weight: 500; line-height: 60px; letter-spacing: .35px; padding-bottom: 3px; -webkit-text-stroke: .5px currentColor; }
  .tut { width: 145px; }
  .active { width: 199px; box-sizing: border-box; text-align: center; border-bottom: 4px solid #fff; color: #fff; line-height: 56px; font-size: 34px; padding-bottom: 0; margin-bottom: 1px; }
  .pra { width: 153px; margin-left: 16px; }
  .shu { width: 149px; }
  .pro { width: 164px; height: 44px; border-radius: 7px; background: #d8262f; color: #fff; font-weight: 700; font-size: 30px; line-height: 44px; text-align: center; letter-spacing: 1.100px; }
  .xp { margin-left: auto; margin-right: 27px; }
  .site-search { width: 281px; height: 60px; box-sizing: border-box; border: 2px solid #d7dcd8; border-radius: 30px; background: #fff; color: #c8c8c8; font-size: 23px; line-height: 56px; padding-left: 23px; }
  .bell { width: 26px; height: 28px; margin-left: 33px; }
  .plus { width: 25px; height: 25px; margin-left: 42px; }
  .avatar { width: 70px; height: 70px; border-radius: 50%; background: #a84cb8; color: #fff; font-size: 38px; line-height: 69px; text-align: center; margin-left: 39px; }
  .caret { margin-left: 10px; border: 8px solid transparent; border-top: 9px solid #ebf8ee; border-bottom: 0; }

  .page { position: relative; flex: 1; overflow: hidden; display: flex; gap: 56px; padding-left: 112px; font-family: Lato, sans-serif; font-variant-ligatures: none; background: #fff; }
  .sidebar { width: 522px; padding-top: 46px; flex: none; }
  .select { height: 76px; box-sizing: border-box; border: 2px solid #dcdcdc; border-radius: 8px; margin-bottom: 24px; padding: 0 25px 2px 28px; display: flex; align-items: center; justify-content: space-between; font-size: 29.5px; color: #222; }
  .select i { border: 7px solid transparent; border-top: 9px solid #555; border-bottom: 0; margin-top: -2px; }
  .select.placeholder { color: #c6c6c6; padding-left: 29px; }
  .toggle-row { margin-top: 27px; height: 83px; box-sizing: border-box; border: 2px dashed #dedede; border-radius: 8px; padding: 0 16px 6px 26px; display: flex; align-items: center; justify-content: space-between; font-size: 23px; color: #222; }
  .toggle-label { padding-top: 5px; letter-spacing: -.1px; }
  .toggle { width: 99px; height: 42px; border-radius: 21px; background: #f1f1f1; }
  .toggle i { width: 39px; height: 39px; border-radius: 50%; border: 1px solid #d4d4d4; background: #fafafa; box-shadow: 0 2px 3px rgba(0, 0, 0, .15); }
  .heatmap { margin-top: 52px; height: 271px; box-sizing: border-box; border: 4px solid #dedfe1; border-radius: 8px; display: flex; flex-direction: column; overflow: hidden; }
  .months { height: 41px; display: flex; font-size: 21.5px; line-height: 42px; color: #b5b5b5; padding-left: 64px; }
  .dec { width: 162px; } .jan { width: 129px; }
  .cells { flex: 1; display: grid; grid-template-columns: repeat(16, 1fr); grid-template-rows: repeat(7, 1fr); gap: 2.6px; }
  .cells i { background: #f6f6f6; }
  .cells .blank { background: #fff; }
  .cells .done { background: #37b752; }
  .ring { width: 468px; height: 468px; margin: 51px 0 0 27px; }

  .content { width: 1676px; padding-top: 44px; flex: none; }
  .share { height: 137px; box-sizing: border-box; border: 6px solid #2f88cb; background: #f8ffff; box-shadow: 10px 10px 0 #2f88cb; display: flex; align-items: center; gap: 10px; padding: 0 35px 0 39px; margin-bottom: 18px; }
  .share strong { flex: 1; color: #2f88cb; font-size: 39px; font-weight: 700; letter-spacing: .4px; padding-bottom: 2px; }
  .share svg { width: 66px; height: 66px; }
  .card { height: 261px; margin-top: 11.5px; box-sizing: border-box; border-bottom: 2px solid #dcdcdc; padding: 16px 28px 0 15px; }
  .hover { background: #f7f7f7; }
  .share + .card { margin-top: 30px; }
  .card-head { display: flex; justify-content: space-between; }
  h2 { margin: 0; font-size: 36.7px; line-height: 44px; font-weight: 700; color: #222; }
  .dots { display: flex; gap: 2.500px; padding-top: 16px; }
  .dots i { width: 13.5px; height: 13.5px; border-radius: 50%; background: #aaa; }
  .hover .dots i { background: #555; }
  p { margin: 1px 0 16px; height: 108px; font-size: 30px; line-height: 36px; letter-spacing: .13px; color: #4c4c4c; white-space: nowrap; }
  p span { display: block; }
  .tags { display: flex; gap: 6.500px; height: 47px; }
  .tag { background: #e7e7e7; border-radius: 7px; padding: 0 18px; font-size: 23.4px; line-height: 45px; font-weight: 700; color: #616161; }
  .complete { background: #2db84c; color: #fff; }
  .level { margin-left: auto; padding-right: 9px; font-size: 25px; line-height: 51px; color: #fbbd41; }

  .shade { position: absolute; left: 0; right: 0; bottom: 0; height: 90px; background: linear-gradient(rgba(0, 0, 0, 0), rgba(0, 0, 0, .03) 50%, rgba(0, 0, 0, .1)); }
  .language { position: absolute; right: 15px; bottom: 14px; width: 249px; height: 61px; border-radius: 8px; overflow: hidden; display: flex; background: linear-gradient(#e0e1e2, #cfd0d1); color: #595959; font-size: 30px; font-weight: 700; }
  .lang-arrow { width: 72px; display: flex; align-items: center; justify-content: center; background: linear-gradient(#cacbcd, #bfc0c2); }
  .lang-arrow i { border: 8px solid transparent; border-bottom: 9px solid #595959; border-top: 0; }
  .lang-name { flex: 1; text-align: center; line-height: 61px; }
  .link-status { position: absolute; left: 0; bottom: 0; width: 609px; height: 42px; box-sizing: border-box; padding-left: 10px; border-radius: 0 8px 0 0; background: #1f2120; color: #c9c9c9; font: 24px/43px Inter, sans-serif; letter-spacing: -.07px; box-shadow: 0 0 10px rgba(0, 0, 0, .25); white-space: nowrap; }

  .dock { position: absolute; left: 68px; top: 1486px; width: 2424px; height: 105px; box-sizing: border-box; border: 2px solid #b06488; border-radius: 30px; padding: 14px 18px 0 14px; display: flex; gap: 20.450px;
    background: linear-gradient(90deg, #9c3d6b 0, #913a64 16%, #5c2c43 20%, #24181d 27%, #21171b 34%, #5a2a41 39%, #8b385f 44%, #953b65 70%, #9a3d69); box-shadow: 0 0 0 1px rgba(40, 10, 25, .6); }
  .dock-item { position: relative; width: 66px; height: 66px; flex: none; }
  .app { width: 66px; height: 66px; overflow: visible; filter: drop-shadow(0 1px 1px rgba(0, 0, 0, .3)); }
  .badge { position: absolute; right: -9px; top: -8px; min-width: 32px; height: 30px; padding: 0; border-radius: 15px; background: #f33f3a; color: #fff; font-size: 17px; line-height: 30px; text-align: center; }
  .running { position: absolute; left: 29px; top: 76px; width: 8px; height: 8px; border-radius: 50%; background: #fdb7dc; }
  .divider { width: 2px; height: 76px; margin: -2px 7px 0 9px; background: #c9729c; flex: none; }
  .second { margin: -2px -12px 0 8px; }
  .mini { width: 78px; height: 62px; margin: 11px -12.500px 0 0; overflow: visible; }
  .second + .mini { margin-left: 15px; }
  .trash { width: 62px; height: 76px; margin: -6px 0 0 10px; }
</style>
